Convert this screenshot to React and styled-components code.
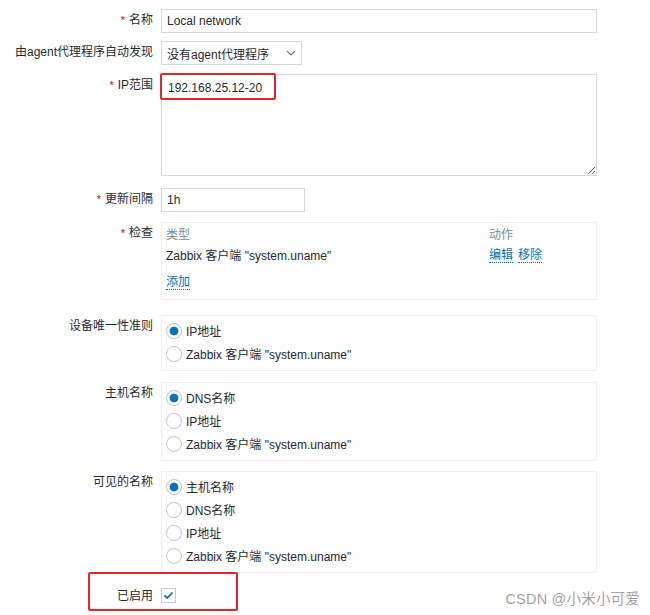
import React from 'react';
import styled, { createGlobalStyle } from 'styled-components';

const Global = createGlobalStyle`
  body {
    margin: 0;
    background: #ffffff;
    font-family: "Liberation Sans", "Noto Sans CJK SC", sans-serif;
    font-size: 12px;
    color: #1f2c33;
  }
`

const Page = styled.div`
  position: relative;
  width: 650px;
  height: 615px;
  padding-top: 9px;
  box-sizing: border-box;
  overflow: hidden;
`
const Row = styled.div`
  position: relative;
  display: grid;
  grid-template-columns: 153px 436px;
  column-gap: 8px;
  margin-top: ${p => p.$mt || 0}px;
  align-items: ${p => (p.$center ? 'center' : 'start')};
`
const Label = styled.div`
  text-align: right;
  line-height: 14px;
  padding-top: ${p => (p.$center ? 0 : 4)}px;
  white-space: nowrap;
  color: #1f2c33;
`
const Star = styled.span`
  color: #d40000;
  font-size: 11px;
  margin-right: 4px;
`
const Input = styled.input`
  box-sizing: border-box;
  width: ${p => p.$w || 436}px;
  height: 24px;
  border: 1px solid #d3d9dc;
  padding: 0 5px;
  font: inherit;
  color: #1f2c33;
  outline: none;
`
const Select = styled.div`
  box-sizing: border-box;
  width: 141px;
  height: 24px;
  border: 1px solid #d3d9dc;
  padding: 0 5px;
  display: flex;
  align-items: center;
  justify-content: space-between;
`
const AreaWrap = styled.div`
  position: relative;
  width: 436px;
  height: 102px;
`
const Area = styled.textarea`
  box-sizing: border-box;
  width: 436px;
  height: 102px;
  border: 1px solid #d3d9dc;
  padding: 6px 6px;
  font: inherit;
  line-height: 14px;
  color: #1f2c33;
  resize: vertical;
  outline: none;
  display: block;
`
const Highlight = styled.div`
  position: absolute;
  left: ${p => p.$l}px;
  top: ${p => p.$t}px;
  width: ${p => p.$w}px;
  height: ${p => p.$h}px;
  border: 2px solid #e3262a;
  border-radius: 2px;
  box-sizing: border-box;
  pointer-events: none;
`
const Box = styled.div`
  box-sizing: border-box;
  width: 436px;
  border: 1px solid #eef0f2;
  background: #fdfdfd;
  padding: ${p => p.$pad};
`
const Table = styled.div`
  display: grid;
  grid-template-columns: 323px auto;
  line-height: 14px;
`
const Th = styled.div`
  color: #768d99;
`
const Td = styled.div`
  margin-top: 7px;
  display: flex;
  gap: 5px;
`
const Link = styled.span`
  color: #0275b8;
  border-bottom: 1px dotted #0275b8;
  line-height: 13px;
`
const AddRow = styled.div`
  margin-top: 12px;
  line-height: 14px;
`
const RadioItem = styled.div`
  height: 23px;
  display: flex;
  align-items: center;
  gap: 4px;
`
const Radio = styled.span`
  box-sizing: border-box;
  width: 16px;
  height: 16px;
  border-radius: 50%;
  border: 1px solid #bfc8cd;
  background: ${p =>
    p.$on ? 'radial-gradient(circle, #0a72b9 0 4px, #ffffff 4.8px)' : '#ffffff'};
`
const Check = styled.span`
  box-sizing: border-box;
  width: 15px;
  height: 15px;
  border: 1px solid #c6ced2;
  display: flex;
  align-items: center;
  justify-content: center;
`
const Watermark = styled.div`
  position: absolute;
  right: 10px;
  bottom: 7px;
  font-size: 14.5px;
  color: #a3a3a3;
  letter-spacing: 0.2px;
`

const RadioGroup = ({ items }) => (
  <Box $pad="3px 4px 5px">
    {items.map((t, i) => (
      <RadioItem key={t}>
        <Radio $on={i === 0} />
        <span>{t}</span>
      </RadioItem>
    ))}
  </Box>
)

const uname = 'Zabbix 客户端 "system.uname"'

export default function App() {
  return (
    <Page>
      <Global />
      <Row>
        <Label><Star>*</Star>名称</Label>
        <Input readOnly defaultValue="Local network" />
      </Row>
      <Row $mt={8}>
        <Label>由agent代理程序自动发现</Label>
        <Select>
          <span>没有agent代理程序</span>
          <svg width="10" height="6" viewBox="0 0 10 6">
            <polyline points="1,1 5,5 9,1" fill="none" stroke="#6f7f88" strokeWidth="1.1" />
          </svg>
        </Select>
      </Row>
      <Row $mt={9}>
        <Label><Star>*</Star>IP范围</Label>
        <AreaWrap>
          <Area readOnly defaultValue="192.168.25.12-20" />
          <Highlight $l={-1} $t={-1} $w={116} $h={27} />
        </AreaWrap>
      </Row>
      <Row $mt={12}>
        <Label><Star>*</Star>更新间隔</Label>
        <Input $w={144} readOnly defaultValue="1h" />
      </Row>
      <Row $mt={10}>
        <Label><Star>*</Star>检查</Label>
        <Box $pad="5px 5px 10px 4px">
          <Table>
            <Th>类型</Th>
            <Th>动作</Th>
            <Td>{uname}</Td>
            <Td>
              <Link>编辑</Link>
              <Link>移除</Link>
            </Td>
          </Table>
          <AddRow><Link>添加</Link></AddRow>
        </Box>
      </Row>
      <Row $mt={15}>
        <Label>设备唯一性准则</Label>
        <RadioGroup items={['IP地址', uname]} />
      </Row>
      <Row $mt={11}>
        <Label>主机名称</Label>
        <RadioGroup items={['DNS名称', 'IP地址', uname]} />
      </Row>
      <Row $mt={10}>
        <Label>可见的名称</Label>
        <RadioGroup items={['主机名称', 'DNS名称', 'IP地址', uname]} />
      </Row>
      <Row $mt={15} $center>
        <Label $center>已启用</Label>
        <Check>
          <svg width="11" height="9" viewBox="0 0 11 9">
            <polyline points="1.5,4.5 4.2,7 9.5,1.5" fill="none" stroke="#0a72b9" strokeWidth="1.8" />
          </svg>
        </Check>
        <Highlight $l={88} $t={-16} $w={150} $h={39} />
      </Row>
      <Watermark>CSDN @小米小可爱</Watermark>
    </Page>
  );
}
